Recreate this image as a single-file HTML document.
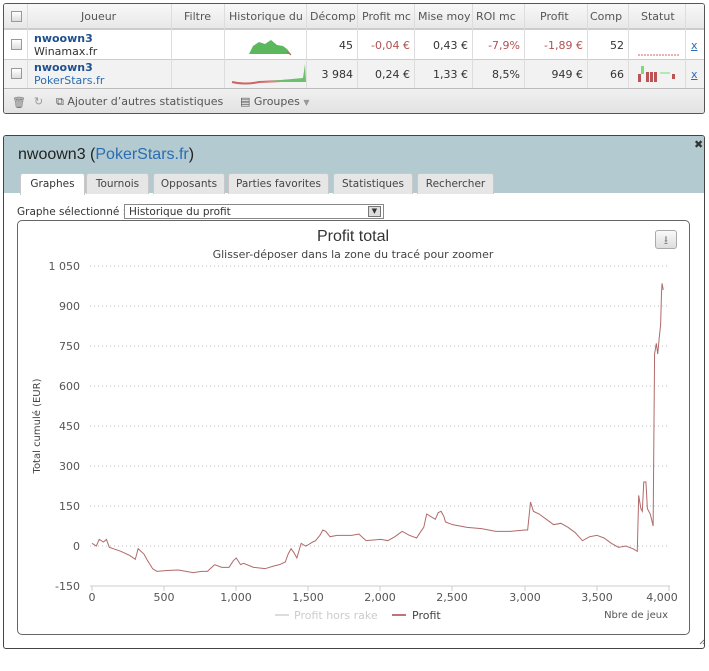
<!DOCTYPE html>
<html><head><meta charset="utf-8"><style>
*{box-sizing:border-box;margin:0;padding:0}
body{width:709px;height:671px;background:#fff;font-family:"DejaVu Sans","Liberation Sans",sans-serif;font-size:11px;color:#333;position:relative;overflow:hidden}
.a{position:absolute}
.tbl{left:3px;top:3px;width:702px;height:111px;border:1px solid #555;border-radius:3px;background:#fff;overflow:hidden}
.hd{left:0;top:0;width:700px;height:25px;background:linear-gradient(#f8f8f8,#e8e8e8);border-bottom:1px solid #ccc}
.r2{left:0;top:55px;width:700px;height:29px;background:#f2f2f2}
.ft{left:0;top:84px;width:700px;height:26px;background:linear-gradient(#f0f0f0,#e2e2e2);border-top:1px solid #bbb}
.vl{top:0;width:1px;height:84px;background:#ddd}
.hl{left:0;width:700px;height:1px;background:#ccc}
.cb{width:11px;height:11px;border:1px solid #999;background:linear-gradient(#fff,#ddd)}
.h{top:6px;color:#555;font-size:11px}
.n{color:#1f4f8f;font-weight:bold;font-size:11px}
.rt{text-align:right}
.red{color:#b35050}
.panel{left:3px;top:135px;width:702px;height:514px;border:1px solid #444;border-radius:3px;background:#fff;overflow:hidden}
.ph{left:0;top:0;width:700px;height:57px;background:#b4cad1}
.tab{top:37px;height:21px;background:#e6e6e6;border:1px solid #c8c8c8;border-bottom:none;border-radius:3px 3px 0 0;font-size:10.5px;color:#444;text-align:center;padding-top:4px}
</style></head><body>
<div class="a tbl">
 <div class="a hd"></div>
 <div class="a r2"></div>
 <div class="a hl" style="top:25px"></div>
 <div class="a hl" style="top:55px"></div>
 <div class="a ft"></div>
 <div class="a vl" style="left:23px"></div><div class="a vl" style="left:167px"></div><div class="a vl" style="left:220px"></div><div class="a vl" style="left:302px"></div><div class="a vl" style="left:353px"></div><div class="a vl" style="left:410px"></div><div class="a vl" style="left:468px"></div><div class="a vl" style="left:520px"></div><div class="a vl" style="left:583px"></div><div class="a vl" style="left:624px"></div><div class="a vl" style="left:681px"></div>
 <div class="a cb" style="left:7px;top:7px"></div><div class="a cb" style="left:7px;top:35px"></div><div class="a cb" style="left:7px;top:64px"></div>
 <div class="a h" style="left:77px">Joueur</div><div class="a h" style="left:180px">Filtre</div><div class="a h" style="left:225px">Historique du</div><div class="a h" style="left:306px">Décomp</div><div class="a h" style="left:358px">Profit mc</div><div class="a h" style="left:414px">Mise moy</div><div class="a h" style="left:472px">ROI mc</div><div class="a h" style="left:536px">Profit</div><div class="a h" style="left:586px">Comp</div><div class="a h" style="left:637px">Statut</div>
 <div class="a n" style="left:30px;top:28px">nwoown3</div><div class="a" style="left:30px;top:41px">Winamax.fr</div>
 <div class="a n" style="left:30px;top:57px">nwoown3</div><div class="a" style="left:30px;top:70px;color:#2a6db0">PokerStars.fr</div>
 <svg class="a" style="left:225px;top:28px" width="78" height="56"><path d="M20 22 L24 14 L30 10 L36 12 L42 8 L48 13 L54 14 L58 17 L62 22 Z" fill="#5cb85c"/><path d="M58 20 L62 23" stroke="#c55" /><path d="M3 50 Q15 53 30 50 L75 48" stroke="#c66" fill="none" stroke-width="2"/><path d="M30 50 L74 46 L76 32 L77 50 Z" fill="#6cbf6c"/></svg>
 <div class="a rt" style="left:303px;width:46px;top:35px">45</div><div class="a rt" style="left:303px;width:46px;top:64px">3 984</div>
 <div class="a rt red" style="left:354px;width:52px;top:35px">-0,04 €</div><div class="a rt" style="left:354px;width:52px;top:64px">0,24 €</div>
 <div class="a rt" style="left:411px;width:53px;top:35px">0,43 €</div><div class="a rt" style="left:411px;width:53px;top:64px">1,33 €</div>
 <div class="a rt red" style="left:469px;width:47px;top:35px">-7,9%</div><div class="a rt" style="left:469px;width:47px;top:64px">8,5%</div>
 <div class="a rt red" style="left:521px;width:58px;top:35px">-1,89 €</div><div class="a rt" style="left:521px;width:58px;top:64px">949 €</div>
 <div class="a rt" style="left:584px;width:36px;top:35px">52</div><div class="a rt" style="left:584px;width:36px;top:64px">66</div>
 <svg class="a" style="left:630px;top:28px" width="50" height="56"><path d="M4 23 H46" stroke="#c66" stroke-dasharray="2 1"/><rect x="7" y="34" width="3" height="8" fill="#7d7"/><rect x="4" y="42" width="3" height="8" fill="#b55"/><rect x="12" y="40" width="3" height="10" fill="#b55"/><rect x="16" y="40" width="3" height="10" fill="#b55"/><rect x="20" y="40" width="3" height="10" fill="#b55"/><rect x="38" y="42" width="3" height="5" fill="#b55"/><path d="M26 41 H36" stroke="#7d7"/></svg>
 <div class="a" style="left:687px;top:35px;color:#2a6db0;text-decoration:underline">x</div><div class="a" style="left:687px;top:64px;color:#2a6db0;text-decoration:underline">x</div>
 <div class="a" style="left:8px;top:92px;color:#777">🗑</div><div class="a" style="left:30px;top:91px;color:#999">↻</div>
 <div class="a" style="left:52px;top:91px;color:#555">⧉ Ajouter d’autres statistiques</div>
 <div class="a" style="left:236px;top:91px;color:#555">▤ Groupes <span style="color:#999;font-size:8px">▼</span></div>
</div>

<div class="a panel">
 <div class="a ph"></div>
 <div class="a" style="left:14px;top:10px;font-family:'Liberation Sans',sans-serif;font-size:16px;color:#222">nwoown3 (<span style="color:#2a6db0">PokerStars.fr</span>)</div>
 <div class="a" style="left:690px;top:2px;font-weight:bold;font-size:11px">✖</div>
 <div class="a tab" style="left:16px;width:65px;background:#fff;color:#333;height:22px">Graphes</div>
 <div class="a tab" style="left:82px;width:63px">Tournois</div>
 <div class="a tab" style="left:149px;width:72px">Opposants</div>
 <div class="a tab" style="left:224px;width:101px">Parties favorites</div>
 <div class="a tab" style="left:329px;width:80px">Statistiques</div>
 <div class="a tab" style="left:413px;width:77px">Rechercher</div>
 <div class="a" style="left:13px;top:70px;font-size:10.5px">Graphe sélectionné :</div>
 <div class="a" style="left:120px;top:68px;width:260px;height:15px;border:1px solid #888;font-size:10.5px;padding:1px 4px">Historique du profit</div>
 <div class="a" style="left:364px;top:70px;width:13px;height:11px;border:1px solid #777;background:#ddd;font-size:7px;text-align:center">▼</div>
 <div class="a" style="left:13px;top:84px;width:673px;height:415px;border:1px solid #666;border-radius:5px"></div>
</div>
<div class="a" style="left:17px;top:228px;width:672px;text-align:center;font-family:'Liberation Sans',sans-serif;font-size:16px;color:#333">Profit total</div>
<div class="a" style="left:17px;top:248px;width:672px;text-align:center;font-size:11px;color:#444">Glisser-déposer dans la zone du tracé pour zoomer</div>
<div class="a" style="left:655px;top:230px;width:22px;height:19px;border:1px solid #aaa;border-radius:3px;background:linear-gradient(#fafafa,#ddd);text-align:center;color:#888;font-size:12px">⭳</div>
<svg class="a" style="left:0;top:0" width="709" height="671">
 <g stroke="#bbb" stroke-dasharray="1 3">
  <path d="M90 266H670M90 306H670M90 346H670M90 386H670M90 426H670M90 466H670M90 506H670M90 546H670"/>
 </g>
 <path d="M90 586H670" stroke="#ccc"/>
 <g stroke="#ccc"><path d="M92 586v5M164 586v5M236 586v5M308 586v5M380 586v5M452 586v5M525 586v5M597 586v5M669 586v5"/></g>
 <g font-family="DejaVu Sans,sans-serif" font-size="11" fill="#555" text-anchor="end">
  <text x="80" y="270">1 050</text><text x="80" y="310">900</text><text x="80" y="350">750</text><text x="80" y="390">600</text><text x="80" y="430">450</text><text x="80" y="470">300</text><text x="80" y="510">150</text><text x="80" y="550">0</text><text x="80" y="590">-150</text>
 </g>
 <g font-family="DejaVu Sans,sans-serif" font-size="11" fill="#555" text-anchor="middle">
  <text x="92" y="601">0</text><text x="164" y="601">500</text><text x="236" y="601">1,000</text><text x="308" y="601">1,500</text><text x="380" y="601">2,000</text><text x="452" y="601">2,500</text><text x="525" y="601">3,000</text><text x="597" y="601">3,500</text><text x="662" y="601">4,000</text>
 </g>
 <text x="40" y="426" transform="rotate(-90 40 426)" text-anchor="middle" font-family="DejaVu Sans,sans-serif" font-size="10" fill="#444">Total cumulé (EUR)</text>
 <text x="668" y="618" text-anchor="end" font-family="DejaVu Sans,sans-serif" font-size="10" fill="#555">Nbre de jeux</text>
 <path d="M275 615H289" stroke="#ddd" stroke-width="2"/><text x="294" y="619" font-family="DejaVu Sans,sans-serif" font-size="11" fill="#ccc">Profit hors rake</text>
 <path d="M392 615H406" stroke="#b77" stroke-width="2"/><text x="412" y="619" font-family="DejaVu Sans,sans-serif" font-size="11" fill="#444">Profit</text>
 <polyline transform="matrix(0.14425,0,0,-0.26667,92,546)" vector-effect="non-scaling-stroke" fill="none" stroke="#b06a6a" stroke-width="1" points="0,10 30,0 50,25 80,15 100,25 120,-5 200,-20 260,-35 300,-50 320,-10 340,-20 360,-30 380,-50 420,-85 450,-95 520,-92 600,-90 700,-100 760,-95 800,-95 830,-80 850,-70 900,-80 950,-80 980,-55 1000,-45 1030,-70 1050,-65 1120,-80 1200,-85 1260,-75 1300,-70 1340,-60 1360,-30 1380,-10 1400,-25 1420,-45 1450,10 1480,0 1500,5 1530,15 1550,20 1580,40 1600,60 1620,55 1650,35 1700,40 1800,40 1850,45 1880,30 1900,20 2000,25 2050,20 2100,35 2150,55 2200,40 2250,30 2280,55 2300,70 2320,120 2350,110 2380,100 2400,125 2420,130 2440,110 2450,90 2500,80 2600,70 2700,65 2800,55 2900,55 3000,60 3020,60 3040,165 3060,130 3100,120 3150,100 3200,80 3250,85 3300,70 3350,50 3400,20 3450,35 3500,40 3550,30 3600,10 3650,-5 3700,0 3750,-10 3780,-20 3790,190 3805,140 3815,130 3825,240 3840,240 3850,140 3870,120 3890,75 3900,720 3912,760 3922,720 3932,780 3942,830 3948,950 3952,985 3960,960"/>
 <path d="M700 644L704 640M703 644L704 643" stroke="#777"/>
</svg>
</body></html>
